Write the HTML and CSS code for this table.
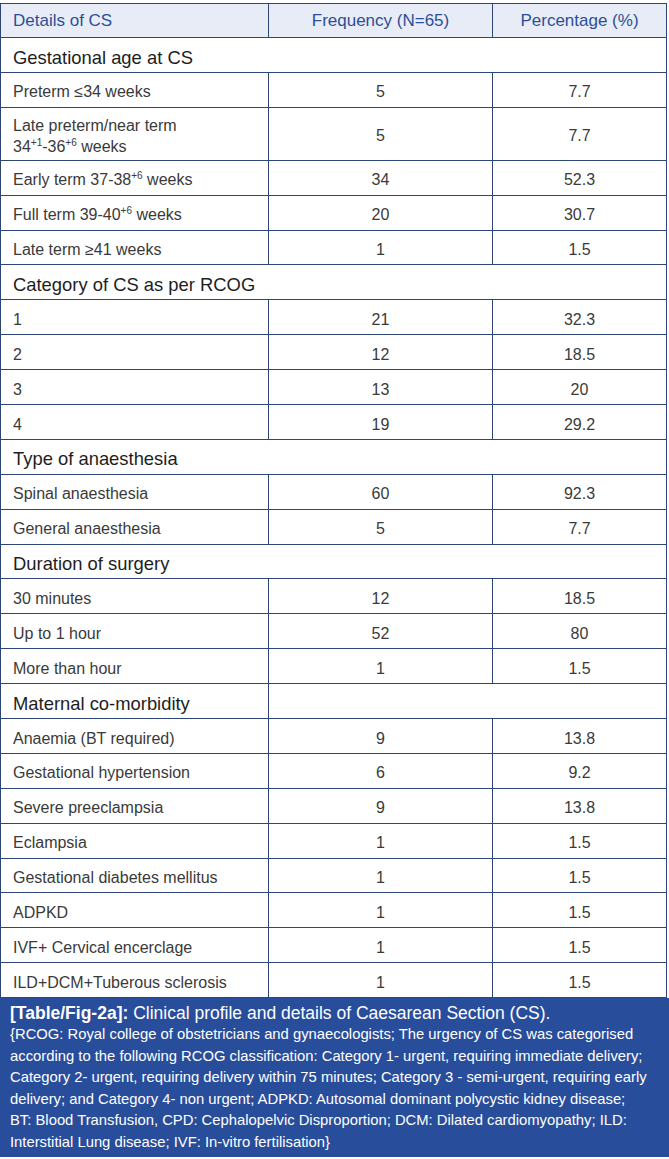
FILE: index.html
```html
<!DOCTYPE html>
<html>
<head>
<meta charset="utf-8">
<link rel="stylesheet" href="styles.css">
</head>
<body>
<div class="fig">
<table class="data">
  <thead>
    <tr><th class="c1">Details of CS</th><th>Frequency (N=65)</th><th>Percentage (%)</th></tr>
  </thead>
  <tbody>
    <tr class="sec"><td colspan="3">Gestational age at CS</td></tr>
    <tr><td>Preterm ≤34 weeks</td><td>5</td><td>7.7</td></tr>
    <tr class="two"><td>Late preterm/near term<br>34<sup>+1</sup>-36<sup>+6</sup> weeks</td><td>5</td><td>7.7</td></tr>
    <tr><td>Early term 37-38<sup>+6</sup> weeks</td><td>34</td><td>52.3</td></tr>
    <tr><td>Full term 39-40<sup>+6</sup> weeks</td><td>20</td><td>30.7</td></tr>
    <tr><td>Late term ≥41 weeks</td><td>1</td><td>1.5</td></tr>
    <tr class="sec"><td colspan="3">Category of CS as per RCOG</td></tr>
    <tr><td>1</td><td>21</td><td>32.3</td></tr>
    <tr><td>2</td><td>12</td><td>18.5</td></tr>
    <tr><td>3</td><td>13</td><td>20</td></tr>
    <tr><td>4</td><td>19</td><td>29.2</td></tr>
    <tr class="sec"><td colspan="3">Type of anaesthesia</td></tr>
    <tr><td>Spinal anaesthesia</td><td>60</td><td>92.3</td></tr>
    <tr><td>General anaesthesia</td><td>5</td><td>7.7</td></tr>
    <tr class="sec"><td colspan="3">Duration of surgery</td></tr>
    <tr><td>30 minutes</td><td>12</td><td>18.5</td></tr>
    <tr><td>Up to 1 hour</td><td>52</td><td>80</td></tr>
    <tr><td>More than hour</td><td>1</td><td>1.5</td></tr>
    <tr class="sec"><td>Maternal co-morbidity</td><td colspan="2"></td></tr>
    <tr><td>Anaemia (BT required)</td><td>9</td><td>13.8</td></tr>
    <tr><td>Gestational hypertension</td><td>6</td><td>9.2</td></tr>
    <tr><td>Severe preeclampsia</td><td>9</td><td>13.8</td></tr>
    <tr><td>Eclampsia</td><td>1</td><td>1.5</td></tr>
    <tr><td>Gestational diabetes mellitus</td><td>1</td><td>1.5</td></tr>
    <tr><td>ADPKD</td><td>1</td><td>1.5</td></tr>
    <tr><td>IVF+ Cervical encerclage</td><td>1</td><td>1.5</td></tr>
    <tr><td>ILD+DCM+Tuberous sclerosis</td><td>1</td><td>1.5</td></tr>
  </tbody>
</table>
<div class="caption">
  <p class="title"><b>[Table/Fig-2a]:</b> Clinical profile and details of Caesarean Section (CS).</p>
  <p class="notes">{RCOG: Royal college of obstetricians and gynaecologists; The urgency of CS was categorised<br>according to the following RCOG classification: Category 1- urgent, requiring immediate delivery;<br>Category 2- urgent, requiring delivery within 75 minutes; Category 3 - semi-urgent, requiring early<br>delivery; and Category 4- non urgent; ADPKD: Autosomal dominant polycystic kidney disease;<br>BT: Blood Transfusion, CPD: Cephalopelvic Disproportion; DCM: Dilated cardiomyopathy; ILD:<br>Interstitial Lung disease; IVF: In-vitro fertilisation}</p>
</div>
</div>
</body>
</html>
```
FILE: styles.css
```css
html, body {
  margin: 0;
  padding: 0;
  background: #ffffff;
}
body {
  font-family: "Liberation Sans", Arial, sans-serif;
  color: #3a3a3a;
}
.fig {
  width: 669px;
  padding-top: 3px;
}
.data {
  width: 667px;
  border-collapse: collapse;
  table-layout: fixed;
  border: 1px solid #2e4676;
}
.data th,
.data td {
  border: 1px solid #2e4676;
  padding: 9.5px 12px 5.4px;
  font-size: 16px;
  line-height: 19px;
  font-weight: normal;
  text-align: center;
  vertical-align: middle;
  white-space: nowrap;
}
.data th {
  background: #e8ecf7;
  color: #2d4f96;
  font-size: 17px;
  padding: 7px 12px 7px;
}
.data th.c1 {
  width: 243px;
  text-align: left;
}
.data th:nth-child(2) {
  width: 199px;
}
.data td:first-child {
  text-align: left;
}
.data tr.sec td {
  color: #1e1e1e;
  text-align: left;
  font-size: 18.4px;
}
.data tr.two td {
  line-height: 21px;
  padding-top: 7px;
  padding-bottom: 3px;
}
.data sup {
  font-size: 10px;
  line-height: 0;
  vertical-align: baseline;
  position: relative;
  top: -6px;
}
.caption {
  background: #284d9b;
  color: #ffffff;
  padding: 4px 10px 4px;
}
.caption p {
  margin: 0;
}
.caption .title {
  font-size: 17.5px;
  line-height: 22px;
}
.caption .notes {
  font-size: 14.8px;
  line-height: 21.5px;
  white-space: nowrap;
}
```
